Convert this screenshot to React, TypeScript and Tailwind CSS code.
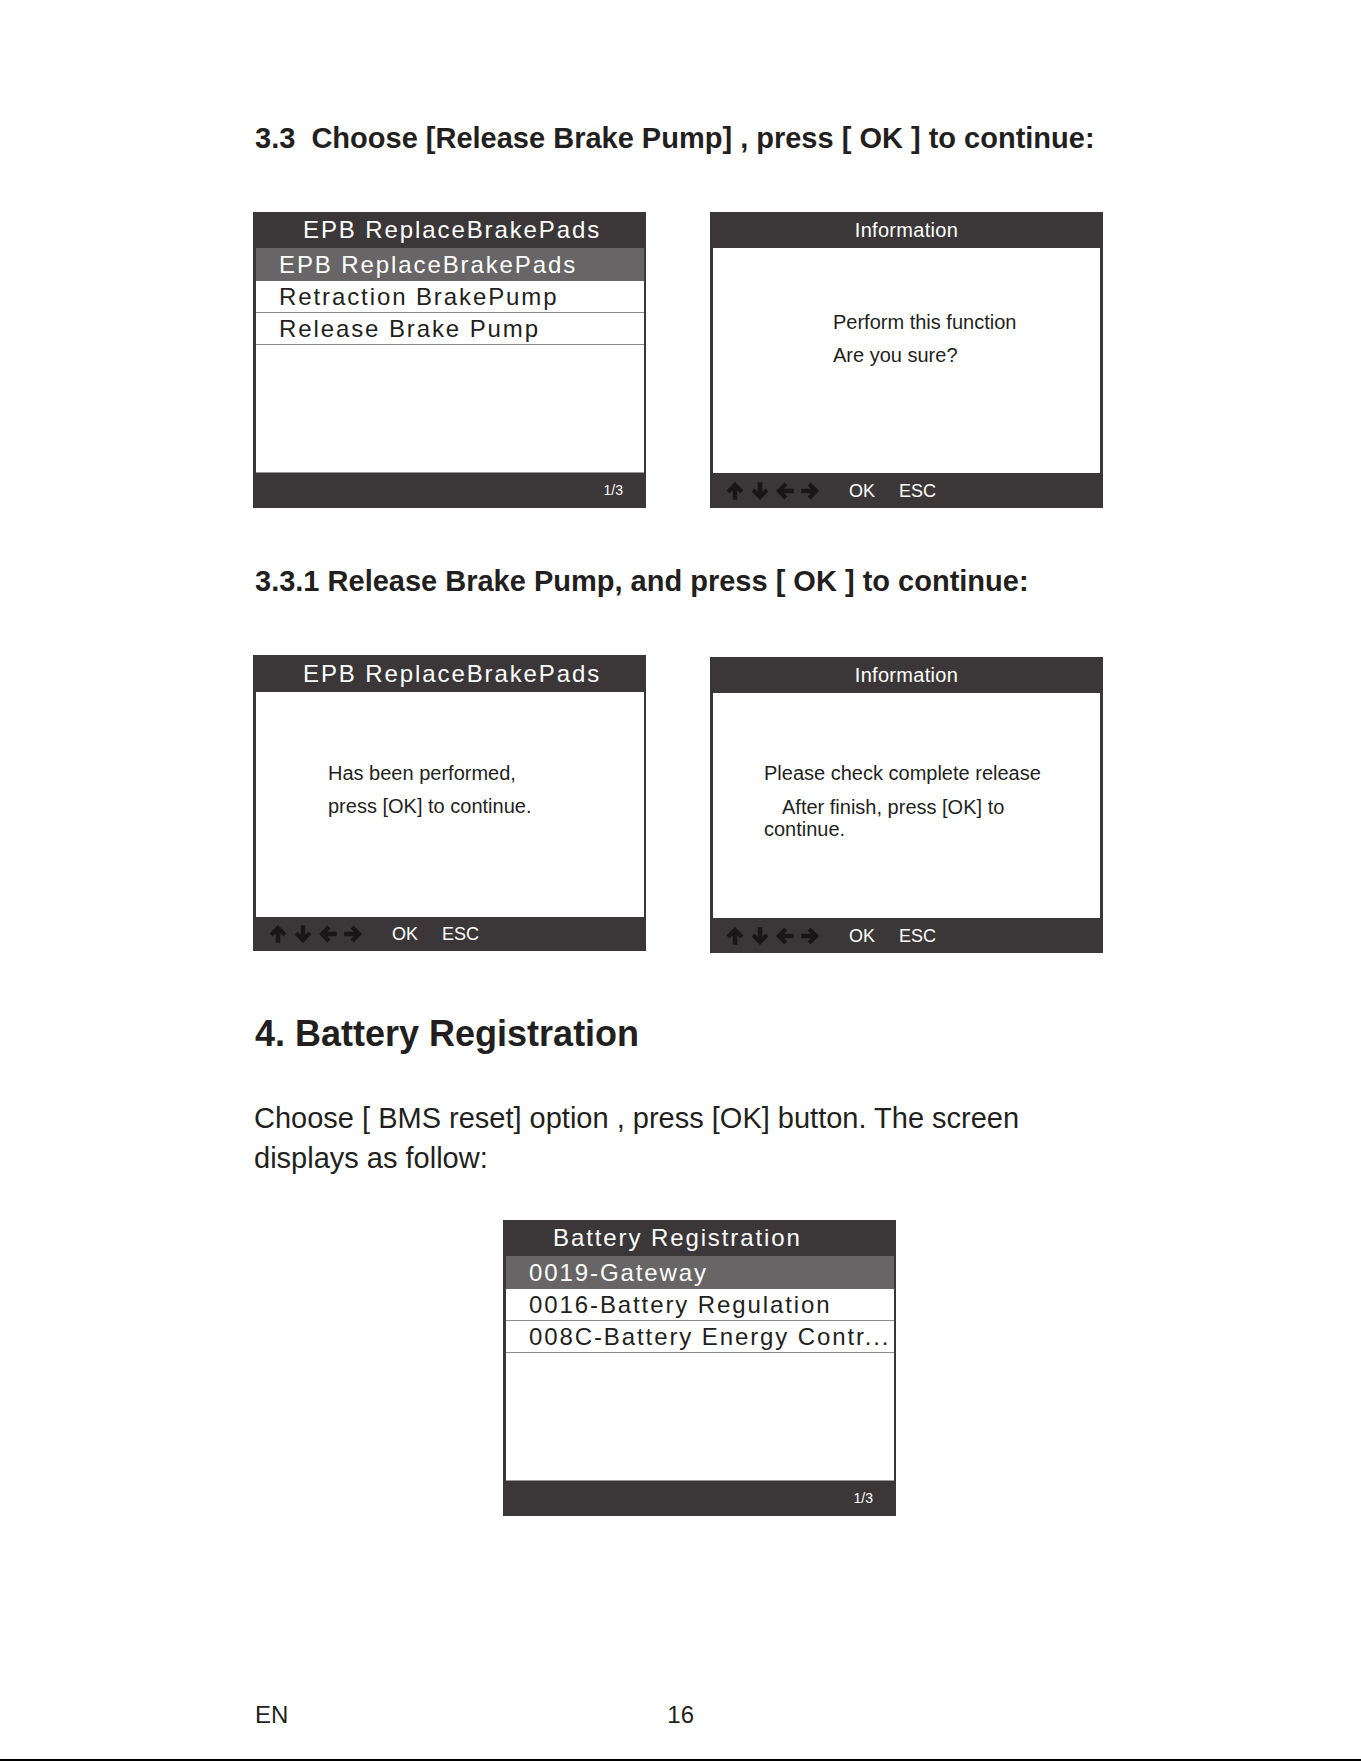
import React from "react";

function Arrow({ dir }: { dir: "up" | "down" | "left" | "right" }) {
  const rot = { up: 0, right: 90, down: 180, left: 270 }[dir];
  return (
    <svg width="18" height="18" viewBox="0 0 16 16">
      <g transform={`rotate(${rot} 8 8)`} stroke="#1a1617" fill="none">
        <polyline points="1.8,8.8 8,2.6 14.2,8.8" strokeWidth="3.8" strokeLinejoin="miter" />
        <line x1="8" y1="3" x2="8" y2="15.8" strokeWidth="4" />
      </g>
    </svg>
  );
}

function NavFooter({ h }: { h: string }) {
  return (
    <div className={`${h} flex items-center pl-[16px] text-white text-[18px] leading-none`}>
      <div className="flex items-center gap-[7px]">
        <Arrow dir="up" />
        <Arrow dir="down" />
        <Arrow dir="left" />
        <Arrow dir="right" />
      </div>
      <span className="ml-[30px]">OK</span>
      <span className="ml-[24px]">ESC</span>
    </div>
  );
}

function ListPanel({ title, items }: { title: string; items: string[] }) {
  return (
    <div className="w-[393px] h-[296px] bg-[#3b3738] flex flex-col shrink-0">
      <div className="h-[36px] pl-[50px] text-white text-[24px] tracking-[1.9px] leading-[36px] whitespace-nowrap">
        {title}
      </div>
      <div className="flex-1 ml-[3px] mr-[2px] bg-white border-b border-[#9a9a9a] flex flex-col overflow-hidden">
        {items.map((it, i) =>
          i === 0 ? (
            <div
              key={i}
              className="h-[33px] bg-[#676566] text-white pl-[23px] text-[24px] tracking-[1.9px] leading-[33px] whitespace-nowrap"
            >
              {it}
            </div>
          ) : (
            <div
              key={i}
              className="h-[32px] border-b border-[#8c8c8c] text-[#231f20] pl-[23px] text-[24px] tracking-[1.9px] leading-[31px] whitespace-nowrap overflow-hidden"
            >
              {it}
            </div>
          )
        )}
      </div>
      <div className="h-[35px] flex items-center justify-end pr-[23px] text-white text-[14px]">1/3</div>
    </div>
  );
}

function InfoPanel({
  title,
  titleH,
  footH,
  children,
}: {
  title: string;
  titleH: string;
  footH: string;
  children: React.ReactNode;
}) {
  return (
    <div className="w-[393px] h-[296px] bg-[#3b3738] flex flex-col shrink-0">
      <div className={`${titleH} flex items-center justify-center text-white text-[20px] tracking-[0.3px] whitespace-nowrap`}>
        {title}
      </div>
      <div className="flex-1 mx-[3px] bg-white text-[#231f20] text-[20px] overflow-hidden">{children}</div>
      <NavFooter h={footH} />
    </div>
  );
}

export default function App() {
  return (
    <div className="relative w-[1361px] h-[1761px] bg-white font-['Liberation_Sans',Arial,sans-serif] text-[#231f20] flex flex-col">
      <div className="pl-[253px] pt-[121px] flex flex-col">
        <h2 className="ml-[2px] text-[29px] font-bold leading-[34px] whitespace-nowrap">
          3.3&nbsp; Choose [Release Brake Pump] , press [ OK ] to continue:
        </h2>

        <div className="mt-[57px] flex gap-[64px] items-start">
          <ListPanel
            title="EPB ReplaceBrakePads"
            items={["EPB ReplaceBrakePads", "Retraction BrakePump", "Release Brake Pump"]}
          />
          <InfoPanel title="Information" titleH="h-[36px]" footH="h-[35px]">
            <div className="pl-[120px] pt-[58px] leading-[33px]">
              <div>Perform this function</div>
              <div>Are you sure?</div>
            </div>
          </InfoPanel>
        </div>

        <h2 className="mt-[56px] ml-[2px] text-[29px] font-bold leading-[34px] whitespace-nowrap">
          3.3.1 Release Brake Pump, and press [ OK ] to continue:
        </h2>

        <div className="mt-[57px] flex gap-[64px] items-start">
          <div className="w-[393px] h-[296px] bg-[#3b3738] flex flex-col shrink-0">
            <div className="h-[37px] pl-[50px] text-white text-[24px] tracking-[1.9px] leading-[37px] whitespace-nowrap">
              EPB ReplaceBrakePads
            </div>
            <div className="flex-1 ml-[3px] mr-[2px] bg-white text-[#231f20] text-[20px]">
              <div className="pl-[72px] pt-[65px] leading-[33px]">
                <div>Has been performed,</div>
                <div>press [OK] to continue.</div>
              </div>
            </div>
            <NavFooter h="h-[34px]" />
          </div>
          <div className="mt-[2px]">
            <InfoPanel title="Information" titleH="h-[36px]" footH="h-[35px]">
              <div className="pl-[51px] pt-[64px]">
                <div className="leading-[33px]">Please check complete release</div>
                <div className="mt-[6px] leading-[22px] pl-[18px]">After finish, press [OK] to</div>
                <div className="leading-[22px]">continue.</div>
              </div>
            </InfoPanel>
          </div>
        </div>

        <h1 className="mt-[60px] ml-[2px] text-[36px] font-bold leading-[42px] whitespace-nowrap">
          4. Battery Registration
        </h1>

        <p className="mt-[43px] ml-[1px] w-[850px] text-[29px] leading-[40px]">
          Choose [ BMS reset] option , press [OK] button. The screen displays as follow:
        </p>

        <div className="mt-[42px] ml-[250px]">
          <ListPanel
            title="Battery Registration"
            items={["0019-Gateway", "0016-Battery Regulation", "008C-Battery Energy Contr..."]}
          />
        </div>

        <div className="mt-[185px] ml-[2px] flex text-[24px] leading-[28px]">
          <span>EN</span>
          <span className="ml-[379px]">16</span>
        </div>
      </div>
      <div className="mt-auto h-[2px] w-full bg-black" />
    </div>
  );
}
